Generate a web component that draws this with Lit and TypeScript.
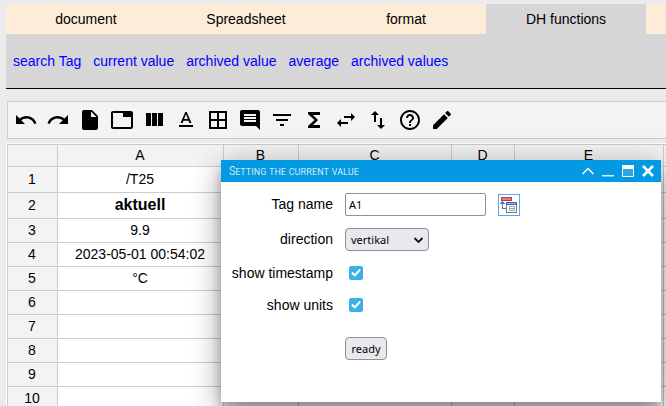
import { LitElement, html, css, svg } from "lit";
import { customElement, state } from "lit/decorators.js";
import { classMap } from "lit/directives/class-map.js";

const TABS = ["document", "Spreadsheet", "format", "DH functions"];

const LINKS = ["search Tag", "current value", "archived value", "average", "archived values"];

const TOOLS: { name: string; path: string }[] = [
  { name: "Undo", path: "M12.5 8c-2.65 0-5.05.99-6.9 2.6L2 7v9h9l-3.62-3.62c1.39-1.16 3.16-1.88 5.12-1.88 3.54 0 6.55 2.31 7.6 5.5l2.37-.78C21.08 11.03 17.15 8 12.5 8z" },
  { name: "Redo", path: "M18.4 10.6C16.55 8.99 14.15 8 11.5 8c-4.65 0-8.58 3.03-9.96 7.22L3.9 16c1.05-3.19 4.05-5.5 7.6-5.5 1.95 0 3.73.72 5.12 1.88L13 16h9V7l-3.6 3.6z" },
  { name: "New file", path: "M6 2c-1.1 0-1.99.9-1.99 2L4 20c0 1.1.89 2 1.99 2H18c1.1 0 2-.9 2-2V8l-6-6H6zm7 7V3.5L18.5 9H13z" },
  { name: "Sheet", path: "M21 3H3c-1.1 0-2 .9-2 2v14c0 1.1.9 2 2 2h18c1.1 0 2-.9 2-2V5c0-1.1-.9-2-2-2zm0 16H3V5h10v4h8v10z" },
  { name: "Columns", path: "M10 18h5V5h-5v13zm-6 0h5V5H4v13zM16 5v13h5V5h-5z" },
  { name: "Text format", path: "M5 17v2h14v-2H5zm4.5-4.2h5l.9 2.2h2.1L12.75 4h-1.5L6.5 15h2.1l.9-2.2zM12 5.98L13.87 11h-3.74L12 5.98z" },
  { name: "Borders", path: "M3 3v18h18V3H3zm8 16H5v-6h6v6zm0-8H5V5h6v6zm8 8h-6v-6h6v6zm0-8h-6V5h6v6z" },
  { name: "Comment", path: "M21.99 4c0-1.1-.89-2-1.99-2H4c-1.1 0-2 .9-2 2v12c0 1.1.9 2 2 2h14l4 4-.01-18zM18 14H6v-2h12v2zm0-3H6V9h12v2zm0-3H6V6h12v2z" },
  { name: "Filter", path: "M10 18h4v-2h-4v2zM3 6v2h18V6H3zm3 7h12v-2H6v2z" },
  { name: "Functions", path: "M18 4H6v2l6.5 6L6 18v2h12v-3h-7l5-5-5-5h7z" },
  { name: "Swap columns", path: "M6.99 11L3 15l3.99 4v-3H14v-2H6.99v-3zM21 9l-3.99-4v3H10v2h7.01v3L21 9z" },
  { name: "Swap rows", path: "M16 17.01V10h-2v7.01h-3L15 21l4-3.99h-3zM9 3L5 6.99h3V14h2V6.99h3L9 3z" },
  { name: "Help", path: "M11 18h2v-2h-2v2zm1-16C6.48 2 2 6.48 2 12s4.48 10 10 10 10-4.48 10-10S17.52 2 12 2zm0 18c-4.41 0-8-3.59-8-8s3.59-8 8-8 8 3.59 8 8-3.59 8-8 8zm0-14c-2.21 0-4 1.79-4 4h2c0-1.1.9-2 2-2s2 .9 2 2c0 2-3 1.75-3 5h2c0-2.25 3-2.5 3-5 0-2.21-1.79-4-4-4z" },
  { name: "Edit", path: "M3 17.25V21h3.75L17.81 9.94l-3.75-3.75L3 17.25zM20.71 7.04c.39-.39.39-1.02 0-1.41l-2.34-2.34c-.39-.39-1.02-.39-1.41 0l-1.83 1.83 3.75 3.75 1.83-1.83z" },
];

const COLUMNS = [
  { label: "A", width: 166 },
  { label: "B", width: 75 },
  { label: "C", width: 153 },
  { label: "D", width: 63 },
  { label: "E", width: 149 },
  { label: "", width: 75 },
];

const ROWS = ["/T25", "aktuell", "9.9", "2023-05-01 00:54:02", "°C", "", "", "", "", ""];

const WINDOW_CONTROLS = [
  { name: "Collapse", shape: svg`<path d="M2.5 11 8 5.5 13.5 11" fill="none" stroke="currentColor" stroke-width="1.5"/>` },
  { name: "Minimize", shape: svg`<path d="M2 12h12v1.5H2z" fill="currentColor" opacity=".85"/>` },
  { name: "Maximize", shape: svg`<path d="M3 2h10q1 0 1 1v10q0 1-1 1H3q-1 0-1-1V3q0-1 1-1zM3 6v7h10V6z" fill="currentColor" fill-rule="evenodd"/><path d="M3 6h10v7H3z" fill="currentColor" opacity=".15"/>` },
  { name: "Close", shape: svg`<path d="M3 3l10 10M13 3L3 13" fill="none" stroke="currentColor" stroke-width="2.6"/>` },
];

@customElement("value-dialog")
export class ValueDialog extends LitElement {
  static styles = css`
    :host {
      display: block;
      background: #fff;
      box-shadow: 0 14px 28px rgba(0, 0, 0, 0.25), 0 10px 10px rgba(0, 0, 0, 0.22), 0 0 28px rgba(0, 0, 0, 0.16);
    }
    .bar {
      display: flex;
      align-items: center;
      justify-content: space-between;
      height: 22px;
      padding: 0 5px 0 8px;
      background: #0399e3;
    }
    .title {
      margin: 0;
      font: 300 12px/22px "Roboto Condensed", "Liberation Sans Narrow", Roboto, sans-serif;
      font-variant: small-caps;
      color: #fff;
    }
    .controls {
      display: flex;
      gap: 4px;
    }
    .control {
      display: block;
      width: 16px;
      height: 16px;
      padding: 0;
      border: 0;
      background: none;
      color: #fff;
    }
    .control svg,
    .picker svg {
      display: block;
    }
    .form {
      display: grid;
      grid-template-columns: 112px 1fr;
      column-gap: 12px;
      grid-template-rows: 35px 35px 32px 32px;
      align-items: center;
      padding: 5px 12px 42px 0;
    }
    .label {
      padding-bottom: 1px;
      text-align: right;
      white-space: nowrap;
    }
    .field {
      display: flex;
      align-items: center;
      gap: 12px;
    }
    .text,
    .select,
    .ready {
      box-sizing: border-box;
      margin: 0;
      height: 23px;
      border: 1px solid #8f8f9d;
      color: #000;
      font: 11px "Noto Sans", sans-serif;
    }
    .text {
      width: 141px;
      padding: 0 3px;
      border-radius: 2px;
      background: #fff;
    }
    .picker {
      width: 22px;
      height: 22px;
      padding: 0;
      border: 1px solid #5aa5ef;
      background: #fff;
    }
    .drop {
      display: inline-grid;
      align-items: center;
    }
    .select {
      grid-area: 1 / 1;
      width: 84px;
      padding: 0 5px;
      appearance: none;
      border-radius: 4px;
      background: #e9e9ed;
    }
    .chevron {
      grid-area: 1 / 1;
      justify-self: end;
      margin-right: 5px;
      pointer-events: none;
    }
    .check {
      display: grid;
      place-items: center;
      appearance: none;
      width: 14px;
      height: 14px;
      margin: 0 4px;
      border-radius: 2px;
      border: 1px solid #8f8f9d;
    }
    .check:checked {
      border-color: #3daee9;
      background: #3daee9;
    }
    .check:checked::before {
      content: "";
      width: 10px;
      height: 10px;
      background: #fff;
      clip-path: polygon(2% 52%, 16% 38%, 38% 60%, 84% 8%, 98% 22%, 39% 88%);
    }
    .ready {
      grid-column: 2;
      justify-self: start;
      width: 42px;
      margin-top: 16px;
      padding: 0;
      border-radius: 4px;
      background: #e9e9ed;
    }
  `;

  render() {
    return html`
      <header class="bar">
        <h2 class="title">Setting the current value</h2>
        <div class="controls">
          ${WINDOW_CONTROLS.map(
            (c) => html`<button class="control" type="button" aria-label=${c.name}>
              <svg width="16" height="16" viewBox="0 0 16 16" aria-hidden="true">${c.shape}</svg>
            </button>`,
          )}
        </div>
      </header>
      <form class="form" @submit=${(e: Event) => e.preventDefault()}>
        <label class="label" for="tag">Tag name</label>
        <div class="field">
          <input class="text" id="tag" type="text" value="A1" />
          <button class="picker" type="button" aria-label="Choose tag">
            <svg width="20" height="20" viewBox="1 1 20 20" aria-hidden="true" shape-rendering="crispEdges">
              <rect x="3.5" y="3.5" width="10" height="3" fill="#e27c7f" stroke="#bd3b42" />
              <path d="M4.5 8v6.5H8" fill="none" stroke="#3d7fb0" />
              <path d="M2 10V9h1V8h1V7h1v1h1v1h1v1z" fill="#3d7fb0" />
              <rect x="8.5" y="8.5" width="10" height="10" fill="#fff" stroke="#77776f" />
              <rect x="8.5" y="8.5" width="10" height="2" fill="#8fb5f5" stroke="#3f66b5" />
              <rect x="11.5" y="12.5" width="5" height="4" fill="#fff" stroke="#aaa" />
              <path d="M12 14.5h4" stroke="#999" />
            </svg>
          </button>
        </div>
        <label class="label" for="direction">direction</label>
        <div class="field">
          <span class="drop">
            <select class="select" id="direction">
              <option>vertikal</option>
            </select>
            <svg class="chevron" width="11" height="8" viewBox="0 0 11 8" aria-hidden="true">
              <path d="M1.5 2l4 4 4-4" fill="none" stroke="#111" stroke-width="1.8" />
            </svg>
          </span>
        </div>
        <label class="label" for="timestamp">show timestamp</label>
        <div class="field"><input class="check" id="timestamp" type="checkbox" checked /></div>
        <label class="label" for="units">show units</label>
        <div class="field"><input class="check" id="units" type="checkbox" checked /></div>
        <button class="ready" type="submit">ready</button>
      </form>
    `;
  }
}

@customElement("app-root")
export class AppRoot extends LitElement {
  static styles = css`
    :host {
      display: block;
      position: relative;
      box-sizing: border-box;
      height: 100vh;
      overflow: hidden;
      padding: 4px 0 0 6px;
      background: #ebebeb;
      color: #000;
      font: 14px/20px "Liberation Sans", Arial, sans-serif;
    }
    .tabs {
      display: flex;
      background: #fdecd7;
    }
    .tab {
      width: 160px;
      height: 30px;
      padding: 0;
      border: 0;
      background: none;
      color: inherit;
      font: inherit;
    }
    .tab.active {
      background: #d6d6d6;
    }
    .ribbon {
      display: flex;
      gap: 12px;
      padding: 17px 7px;
      border-bottom: 1px solid #000;
      background: #d6d6d6;
    }
    .link {
      color: #00f;
      text-decoration: none;
      white-space: nowrap;
    }
    .toolbar {
      display: flex;
      gap: 8px;
      margin: 12px 0 4px 1px;
      padding: 6px;
      border: 1px solid #ccc;
      border-right: 0;
      background: #f3f3f3;
    }
    .tool {
      display: block;
      width: 24px;
      height: 24px;
      padding: 0;
      border: 0;
      background: none;
      color: #000;
    }
    .tool svg {
      display: block;
      fill: currentColor;
    }
    .sheet {
      padding: 1px 0 0 1px;
      background: #fff;
    }
    .grid {
      table-layout: fixed;
      width: max-content;
      border-collapse: separate;
      border-spacing: 0;
    }
    .corner {
      width: 50px;
    }
    .cell,
    .head {
      box-sizing: border-box;
      height: 24px;
      padding: 0 1px 1px 0;
      border: solid #ccc;
      border-width: 1px 0 0 1px;
      text-align: center;
      font-weight: normal;
      white-space: nowrap;
    }
    .head {
      background: #f3f3f3;
    }
    .letters .head {
      height: 22px;
    }
    .tall .head,
    .tall .cell {
      height: 26px;
    }
    .grid .strong {
      font-size: 16px;
      font-weight: bold;
    }
    .dialog {
      position: absolute;
      top: 160px;
      left: 221px;
      right: 5px;
    }
  `;

  @state() private active = 3;

  render() {
    return html`
      <nav class="tabs">
        ${TABS.map(
          (t, i) => html`<button
            class=${classMap({ tab: true, active: i === this.active })}
            type="button"
            @click=${() => (this.active = i)}
          >${t}</button>`,
        )}
      </nav>
      <nav class="ribbon">${LINKS.map((l) => html`<a class="link" href="#">${l}</a>`)}</nav>
      <div class="toolbar" role="toolbar">
        ${TOOLS.map(
          (t) => html`<button class="tool" type="button" aria-label=${t.name}>
            <svg width="24" height="24" viewBox="0 0 24 24" aria-hidden="true"><path d=${t.path} /></svg>
          </button>`,
        )}
      </div>
      <div class="sheet">
        <table class="grid">
          <colgroup>
            <col class="corner" />
            ${COLUMNS.map((c) => html`<col style="width:${c.width}px" />`)}
          </colgroup>
          <thead>
            <tr class="letters">
              <td class="head"></td>
              ${COLUMNS.map((c) => html`<th class="head" scope="col">${c.label}</th>`)}
            </tr>
          </thead>
          <tbody>
            ${ROWS.map(
              (text, r) => html`<tr class=${classMap({ tall: r < 2 })}>
                <th class="head" scope="row">${r + 1}</th>
                ${COLUMNS.map(
                  (_, c) => html`<td class=${classMap({ cell: true, strong: r === 1 && c === 0 })}>${c === 0 ? text : ""}</td>`,
                )}
              </tr>`,
            )}
          </tbody>
        </table>
      </div>
      <value-dialog class="dialog"></value-dialog>
    `;
  }
}
